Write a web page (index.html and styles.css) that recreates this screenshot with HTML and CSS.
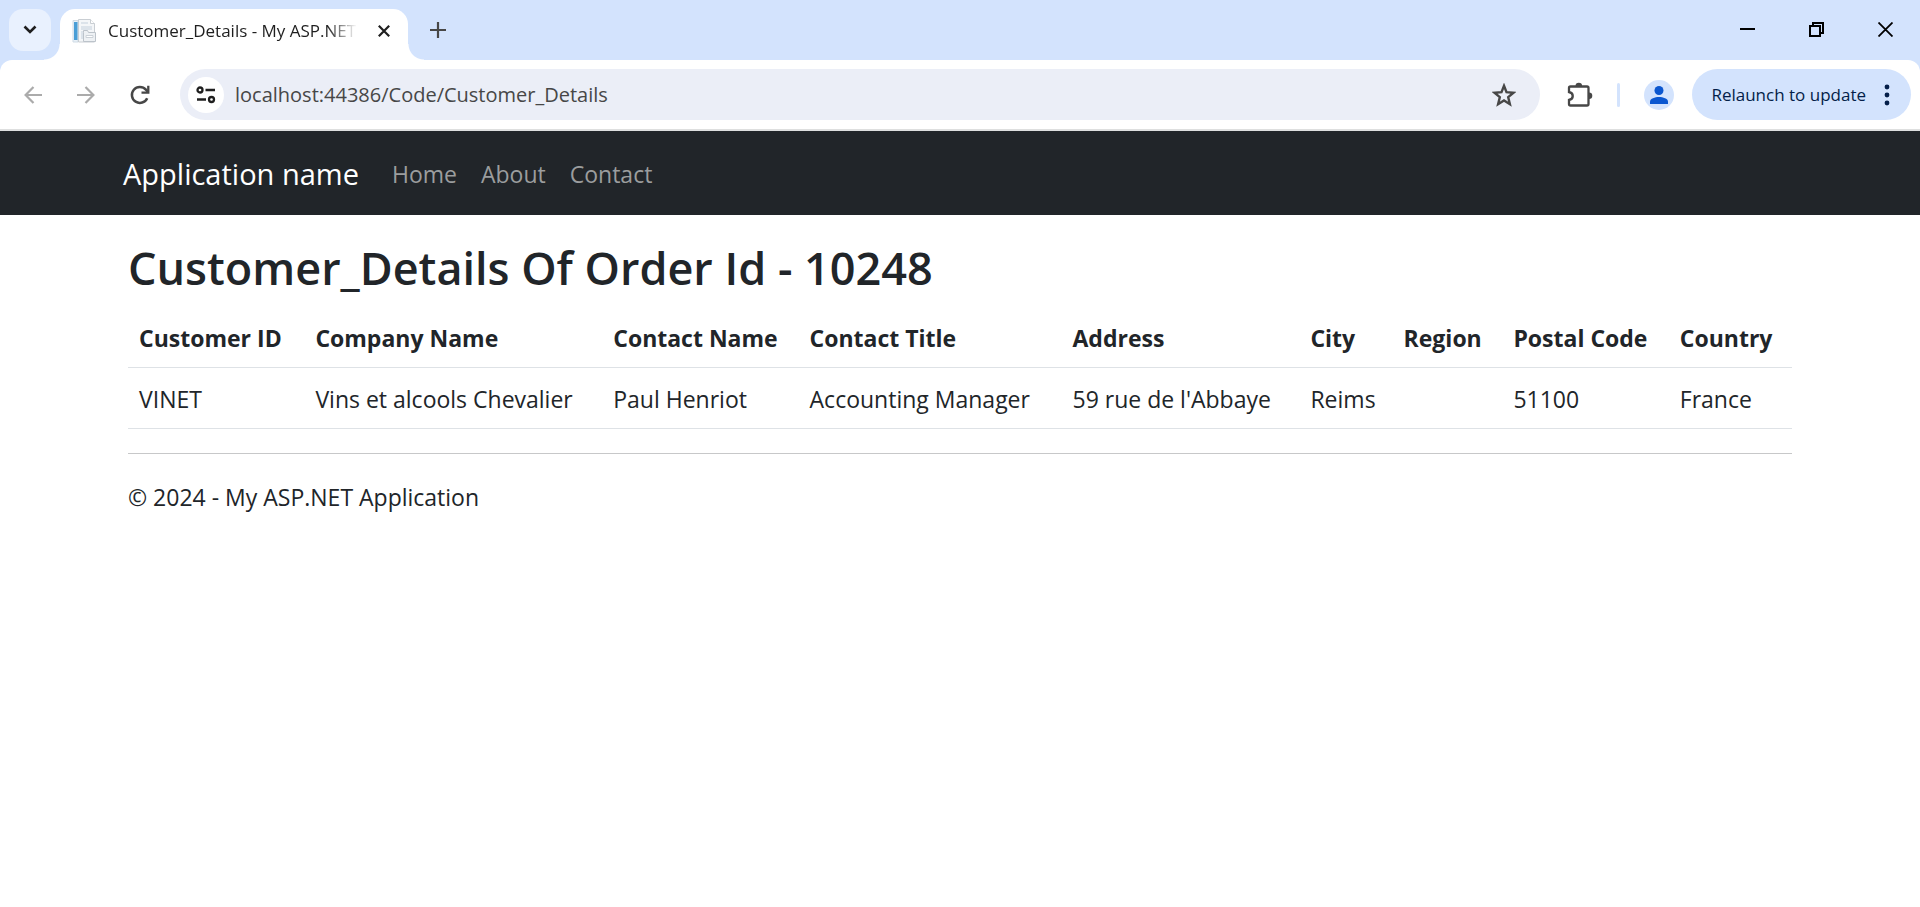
FILE: index.html
```html
<!DOCTYPE html>
<html lang="en">
<head>
<meta charset="utf-8">
<meta name="viewport" content="width=device-width, initial-scale=1">
<title>Customer_Details - My ASP.NET Application</title>
<link rel="stylesheet" href="styles.css">
</head>
<body>
<div class="browser">
  <div class="tab-strip">
    <button class="tab-search" aria-label="Search tabs">
      <svg width="14" height="10" viewBox="0 0 14 10" fill="none" stroke="#1f1f1f" stroke-width="2.6"><path d="M1.5 1.5 7 7l5.500-5.500"/></svg>
    </button>
    <div class="tab">
      <svg class="favicon" width="24" height="24" viewBox="0 0 24 24">
        <path d="M1 1.500h5V23H1z" fill="#e9f1f8" stroke="#cfdbe5" stroke-width="1"/>
        <path d="M2 3h3.500v18H2z" fill="#4a9ed6"/>
        <path d="M6.500.500h12l4 4V23h-16z" fill="#f4f6f8" stroke="#c9ced3"/>
        <path d="M18.500.500v4h4" fill="#fff" stroke="#c9ced3"/>
        <path d="M9 3h7v2H9zM9 7h11v4H9zM9 12h3v8H9z" fill="#dce3ea"/>
        <path d="M11.500 13.500v-2h4l1 2h7v9h-12z" fill="#eef1f4" stroke="#bcc3ca"/>
        <path d="M14 16.500h7v2h-7z" fill="#fff" stroke="#ccd2d8"/>
      </svg>
      <span class="tab-title">Customer_Details - My ASP.NET</span>
      <button class="tab-close" aria-label="Close tab">
        <svg width="12" height="12" viewBox="0 0 12 12" fill="none" stroke="#1f1f1f" stroke-width="2.200"><path d="m.8.8 10.400 10.400M11.200.8.8 11.200"/></svg>
      </button>
    </div>
    <button class="new-tab" aria-label="New tab">
      <svg width="16" height="16" viewBox="0 0 16 16" fill="none" stroke="#474747" stroke-width="2.200"><path d="M8 0v16M0 8h16"/></svg>
    </button>
    <div class="window-controls">
      <button aria-label="Minimize"><svg width="15" height="15" viewBox="0 0 15 15"><path d="M0 6h15v2H0z"/></svg></button>
      <button aria-label="Restore"><svg width="15" height="15" viewBox="0 0 15 15" fill="none" stroke="#000" stroke-width="2"><path d="M1 4h10v10H1zM4 4V1h10v10h-3"/></svg></button>
      <button aria-label="Close"><svg width="15" height="15" viewBox="0 0 15 15" fill="none" stroke="#000" stroke-width="1.800"><path d="m.5.5 14 14M14.500.5l-14 14"/></svg></button>
    </div>
  </div>
  <div class="toolbar-back">
    <div class="toolbar">
      <div class="nav-buttons">
        <button aria-label="Back"><svg width="18" height="18" viewBox="0 0 18 18" fill="none" stroke="#ababab" stroke-width="2.200"><path d="M18 9H2M9.500 1 1.600 9l7.900 8"/></svg></button>
        <button aria-label="Forward"><svg width="18" height="18" viewBox="0 0 18 18" fill="none" stroke="#ababab" stroke-width="2.200"><path d="M0 9h16M8.500 1l7.900 8-7.900 8"/></svg></button>
        <button aria-label="Reload"><svg width="20" height="20" viewBox="0 0 20 20" fill="none" stroke="#474747" stroke-width="2.500"><path d="M17.200 13.200A8 8 0 1 1 15.900 4.600l2 2.200"/><path d="M18.300.8v6.800h-6.800" stroke-width="2.300"/></svg></button>
      </div>
      <div class="omnibox">
        <button class="site-info" aria-label="View site information">
          <svg width="20" height="18" viewBox="0 0 20 18" fill="none" stroke="#1f1f1f" stroke-width="2.300"><circle cx="4" cy="4" r="2.500"/><path d="M9.500 4H19M1 13.500h9"/><circle cx="15.500" cy="13.500" r="2.500"/></svg>
        </button>
        <input class="address" type="text" aria-label="Address" value="localhost:44386/Code/Customer_Details">
        <button class="star" aria-label="Bookmark this tab">
          <svg width="24" height="24" viewBox="0 0 24 24" fill="none" stroke="#474747" stroke-width="2.400"><path d="m12 2.800 2.500 6.300 7 .6-5.300 4.500 1.700 7-5.900-3.700-5.900 3.700 1.700-7-5.300-4.500 7-.6z"/></svg>
        </button>
      </div>
      <div class="actions">
        <button aria-label="Extensions">
          <svg width="26" height="26" viewBox="0 0 26 26"><path d="M3.500 4.500H20a1.500 1.500 0 0 1 1.500 1.500v16a1.500 1.500 0 0 1-1.500 1.500H3.500A1.500 1.500 0 0 1 2 22v-4c5-1 5-7 0-8V6a1.500 1.500 0 0 1 1.500-1.500z" fill="none" stroke="#474747" stroke-width="2.300"/><path d="M8.500 4a3.300 3.300 0 0 1 6.600 0zM22 10.500a3.300 3.300 0 0 1 0 6.600z" fill="#474747"/></svg>
        </button>
        <span class="divider"></span>
        <button class="avatar" aria-label="Profile">
          <svg width="18" height="18" viewBox="0 0 18 18" fill="#0b57d0"><circle cx="9" cy="4.500" r="4.500"/><path d="M0 18v-2.500C0 12.500 5 11 9 11s9 1.500 9 4.500V18z"/></svg>
        </button>
        <button class="relaunch">
          <span>Relaunch to update</span>
          <svg width="6" height="22" viewBox="0 0 6 22" fill="#041e49"><circle cx="3" cy="3" r="2.400"/><circle cx="3" cy="11" r="2.400"/><circle cx="3" cy="19" r="2.400"/></svg>
        </button>
      </div>
    </div>
  </div>
</div>

<nav class="navbar">
  <a class="brand" href="#">Application name</a>
  <ul class="nav-links">
    <li><a href="#">Home</a></li>
    <li><a href="#">About</a></li>
    <li><a href="#">Contact</a></li>
  </ul>
</nav>

<div class="body-content">
  <main>
    <h2>Customer_Details Of Order Id - 10248</h2>
    <table class="details">
      <colgroup>
        <col class="col-id"><col class="col-company"><col class="col-contact"><col class="col-title"><col class="col-address"><col class="col-city"><col class="col-region"><col class="col-postal"><col class="col-country">
      </colgroup>
      <thead>
        <tr>
          <th scope="col">Customer ID</th>
          <th scope="col">Company Name</th>
          <th scope="col">Contact Name</th>
          <th scope="col">Contact Title</th>
          <th scope="col">Address</th>
          <th scope="col">City</th>
          <th scope="col">Region</th>
          <th scope="col">Postal Code</th>
          <th scope="col">Country</th>
        </tr>
      </thead>
      <tbody>
        <tr>
          <td>VINET</td>
          <td>Vins et alcools Chevalier</td>
          <td>Paul Henriot</td>
          <td>Accounting Manager</td>
          <td>59 rue de l'Abbaye</td>
          <td>Reims</td>
          <td></td>
          <td>51100</td>
          <td>France</td>
        </tr>
      </tbody>
    </table>
  </main>
  <hr>
  <footer><p>© 2024 - My ASP.NET Application</p></footer>
</div>
</body>
</html>
```
FILE: styles.css
```css
*, *::before, *::after { box-sizing: border-box; }

body {
  margin: 0;
  background: #fff;
  color: #212529;
  font: 23px/36px "Segoe UI", "Open Sans", "Noto Sans", sans-serif;
}

button {
  display: flex;
  align-items: center;
  justify-content: center;
  flex: none;
  margin: 0;
  padding: 0;
  border: 0;
  background: none;
  font: inherit;
}

svg { display: block; flex: none; }

/* Browser window */
.browser { border-bottom: 2px solid #dedfdf; }

.tab-strip {
  display: flex;
  align-items: flex-start;
  height: 60px;
  padding: 9px 9px 0;
  background: #d3e3fd;
}

.tab-search {
  width: 42px;
  height: 42px;
  border-radius: 14px;
  background: #e9f1fe;
}

.tab {
  position: relative;
  display: flex;
  align-items: center;
  width: 348px;
  height: 51px;
  margin-left: 9px;
  padding: 0 12px 8px;
  border-radius: 15px 15px 0 0;
  background: #fff;
}

.tab::before, .tab::after {
  content: "";
  position: absolute;
  bottom: 0;
  width: 16px;
  height: 16px;
}
.tab::before { left: -16px; background: radial-gradient(circle at 0 0, transparent 15px, #fff 16px); }
.tab::after { right: -16px; background: radial-gradient(circle at 100% 0, transparent 15px, #fff 16px); }

.tab-title {
  flex: 1;
  min-width: 0;
  margin-left: 12px;
  overflow: hidden;
  color: #1f1f1f;
  font-size: 17px;
  line-height: 24px;
  white-space: nowrap;
  mask-image: linear-gradient(to right, #000 calc(100% - 30px), transparent);
}

.tab-close { width: 24px; height: 24px; margin: 0 0 0 15px; }
.new-tab { width: 42px; height: 42px; margin-left: 9px; }

.window-controls {
  display: flex;
  gap: 54px;
  margin: 13px 18px 0 auto;
}

.toolbar-back { background: #d3e3fd; }

.toolbar {
  display: flex;
  align-items: center;
  height: 69px;
  padding: 0 9px 0 24px;
  border-radius: 12px 12px 0 0;
  background: #fff;
}

.nav-buttons { display: flex; gap: 35px; margin-right: 30px; }

.omnibox {
  display: flex;
  flex: 1;
  align-items: center;
  height: 51px;
  padding: 0 24px 0 8px;
  border-radius: 26px;
  background: #ebeef7;
}

.site-info {
  width: 36px;
  height: 36px;
  border-radius: 50%;
  background: #fff;
}

.address {
  flex: 1;
  min-width: 0;
  margin: 0 12px 0 11px;
  padding: 0;
  border: 0;
  outline: 0;
  background: none;
  color: #474747;
  font: 20px/30px "Segoe UI", "Open Sans", "Noto Sans", sans-serif;
}

.actions { display: flex; align-items: center; margin-left: 27px; }

.divider {
  width: 3px;
  height: 24px;
  margin: 0 24px;
  border-radius: 2px;
  background: #d3e3fd;
}

.avatar {
  width: 30px;
  height: 30px;
  margin-right: 18px;
  border-radius: 50%;
  background: #d3e3fd;
}

.relaunch {
  gap: 18px;
  height: 51px;
  padding: 0 21px 0 19px;
  border-radius: 26px;
  background: #d3e3fd;
  color: #041e49;
  font-size: 17px;
  font-weight: 500;
}

/* Site */
.navbar {
  display: flex;
  align-items: center;
  height: 84px;
  padding: 2px 123px 0;
  background: #212529;
}

.brand {
  margin-right: 33px;
  color: #fff;
  font-size: 29px;
  text-decoration: none;
}

.nav-links {
  display: flex;
  gap: 24px;
  margin: 0;
  padding: 0;
  list-style: none;
}
.nav-links a { color: #9b9d9e; text-decoration: none; }

.body-content { padding: 24px 128px 0; }

h2 {
  margin: 0 0 10px;
  font-size: 45px;
  font-weight: 600;
  line-height: 58px;
}

.details {
  width: 100%;
  border-collapse: collapse;
  table-layout: fixed;
}
.details th, .details td {
  padding: 13px 11px 11px;
  border-bottom: 1px solid #dee2e6;
  text-align: left;
  white-space: nowrap;
}
.details th { font-weight: 700; }

.col-id { width: 10.6%; }
.col-company { width: 17.9%; }
.col-contact { width: 11.8%; }
.col-title { width: 15.8%; }
.col-address { width: 14.3%; }
.col-city { width: 5.6%; }
.col-region { width: 6.6%; }
.col-postal { width: 10%; }
.col-country { width: 7.4%; }

hr {
  margin: 24px 0 25px;
  border: 0;
  border-top: 1px solid #c7c8c9;
}

footer p { margin: 0 0 24px; }
```
